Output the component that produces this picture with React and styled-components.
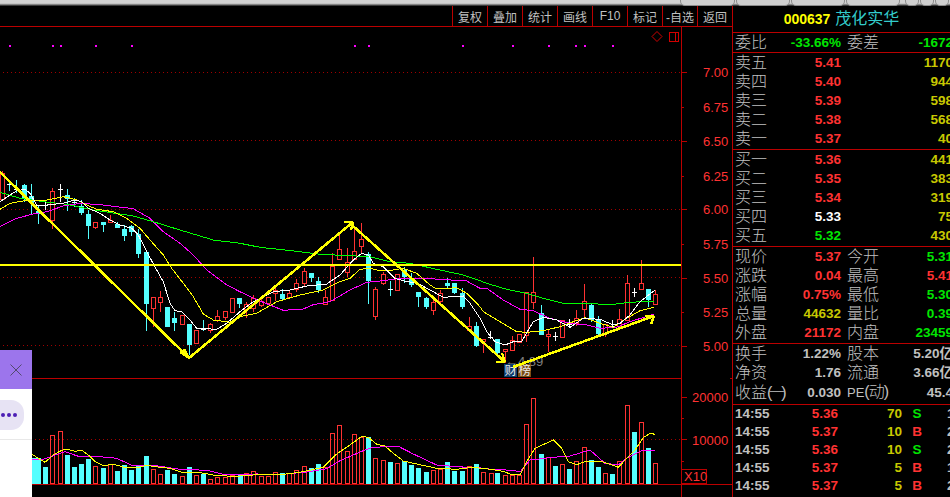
import React from 'react';
import styled, { createGlobalStyle } from 'styled-components';

const FONT = '"Liberation Sans","Noto Sans CJK SC",sans-serif';
const RED = '#ff3232', GREEN = '#00e600', OLIVE = '#c8c800', GRAY = '#c0c0c0', WHITE = '#ffffff';
const LINE = '#bb0000', CYAN = '#54ffff';

const Global = createGlobalStyle`
  html, body { margin: 0; padding: 0; background: #000; overflow: hidden; }
  #root { width: 950px; height: 497px; }
`;
const Page = styled.div`
  position: relative; width: 950px; height: 497px; overflow: hidden;
  display: flex; flex-direction: column; background: #000; font-family: ${FONT};
`;
const TopBar = styled.div`
  height: 6px; flex: none; display: flex; justify-content: flex-end; align-items: flex-end; gap: 1px;
  background: linear-gradient(#d2d2d2 0 3px, #b4b4b4 4px, #555 5px, #222 6px);
`;
const WinPill = styled.span`
  width: ${p => p.$w}px; height: 6px; margin-right: ${p => p.$mr || 0}px; box-sizing: border-box;
  background: #cfcfcf; border: 1px solid #8c8c8c; border-top: none; border-radius: 0 0 5px 5px;
`;
const Main = styled.div`flex: 1; display: flex; min-height: 0;`;
const Left = styled.div`
  width: 732px; flex: none; display: flex; flex-direction: column; border-right: 1px solid ${LINE};
`;
const Toolbar = styled.div`
  height: 20px; flex: none; display: flex; justify-content: flex-end; border-bottom: 1px solid ${LINE};
`;
const ToolButton = styled.div`
  width: 34px; border-left: 1px solid ${LINE}; color: ${GRAY}; font-size: 12px;
  display: flex; align-items: center; justify-content: center; white-space: nowrap;
`;
const ChartSvg = styled.svg`display: block; flex: none; font-family: ${FONT};`;
const AxisText = styled.text`fill: ${RED}; font-size: 13px;`;

const Panel = styled.div`width: 217px; flex: none; overflow: hidden;`;
const Section = styled.section`
  width: 220px; padding-bottom: ${p => p.$pb || 0}px;
  border-bottom: ${p => p.$noline ? 'none' : `1px solid ${LINE}`};
`;
const Header = styled.div`
  height: 26px; width: 217px; display: flex; align-items: center; justify-content: center; gap: 5px;
`;
const Code = styled.span`color: #ffff00; font-weight: 700; font-size: 14px;`;
const Name = styled.span`color: #33cccc; font-size: 16px; line-height: 26px;`;
const Row = styled.div`
  height: 19px; display: grid; grid-template-columns: 106px 106px; column-gap: 6px; padding-left: 2px;
`;
const Cell = styled.div`
  display: flex; justify-content: ${p => p.$end ? 'flex-end' : 'space-between'}; align-items: center; white-space: nowrap;
`;
const Label = styled.span`color: ${GRAY}; font-size: 16px; line-height: 19px; font-weight: 300;`;
const Squeeze = styled.span`letter-spacing: ${p => p.$s}px;`;
const Latin = styled.span`font-size: 13px;`;
const Value = styled.span`color: ${p => p.$c}; font-size: 13.5px; font-weight: 700; line-height: 19px;`;
const TickRow = styled.div`
  height: 18px; display: grid; grid-template-columns: 36px 67px 64px 30px auto; align-items: center;
  padding-left: 2px; font-size: 13.5px; font-weight: 700; line-height: 18px;
`;
const TickTime = styled.span`color: ${GRAY};`;
const TickPrice = styled.span`color: ${RED}; text-align: right;`;
const TickVol = styled.span`color: ${OLIVE}; text-align: right;`;
const TickSide = styled.span`color: ${p => p.$c}; text-align: center;`;
const TickCount = styled.span`color: ${GRAY}; padding-left: 15px;`;

const Float = styled.aside`
  position: absolute; left: 0; top: 350px; width: 32px; height: 147px; background: #fff;
  display: flex; flex-direction: column;
`;
const FloatClose = styled.div`
  height: 39px; flex: none; background: #9c75ec; display: flex; align-items: center; justify-content: center;
`;
const MorePill = styled.div`
  margin: 11px 0 0 -14px; width: 38px; height: 30px; flex: none; border-radius: 13px; background: #e7e3f4;
  display: flex; align-items: center; justify-content: flex-end; gap: 2px; padding-right: 7px; box-sizing: border-box;
`;
const Dot = styled.span`width: 4px; height: 4px; border-radius: 50%; background: #4c1fb4;`;
const FloatRule = styled.div`margin-top: 9px; height: 1px; background: #e8e8e8;`;

/* ---------- chart data read off the picture, in crop coordinates ---------- */
const map = (ox, oy, pts) => pts.map(([x, y]) => [ox + x / 3, oy + y / 3]);
const merge = (...lists) => {
  const out = [];
  lists.flat().forEach(p => { if (!out.length || p[0] > out[out.length - 1][0]) out.push(p); });
  return out;
};
const pathOf = pts => pts.map(p => `${p[0].toFixed(1)},${p[1].toFixed(1)}`).join(' ');

const white = merge(
  map(0, 160, [[0,125],[30,105],[50,92],[75,88],[90,100],[110,135],[140,135],[190,130],[225,120],[245,125],[265,145],[300,160],[330,180],[360,195],[395,205],[415,225],[440,275],[470,330],[490,365],[510,430],[525,452],[545,455],[570,480],[590,505],[650,508],[680,490],[720,455]]),
  map(240, 210, [[0,300],[40,275],[100,245],[150,240],[200,228],[260,222],[300,195],[340,150],[365,130],[385,135],[400,160],[430,170],[465,205],[500,215],[530,218],[570,240],[610,262],[670,258],[690,280],[720,325]]),
  map(470, 240, [[50,275],[75,305],[105,315],[130,305],[155,305],[175,270],[190,245],[220,232],[260,240],[300,262],[340,235],[390,238],[430,255],[450,250],[480,225],[510,185],[555,150]])
);
const yellow = merge(
  map(0, 160, [[0,148],[30,130],[70,123],[130,122],[190,110],[230,120],[260,135],[290,148],[340,155],[380,175],[420,205],[450,240],[490,285],[515,325],[550,370],[580,410],[610,462],[640,480],[690,487],[720,470]]),
  map(240, 210, [[0,330],[50,310],[110,275],[180,255],[250,240],[300,215],[330,205],[360,178],[390,175],[420,182],[460,180],[490,175],[530,190],[570,225],[590,237],[650,233],[680,250],[720,290]]),
  map(470, 240, [[40,215],[90,245],[140,275],[170,277],[220,272],[270,260],[310,245],[345,233],[390,250],[430,262],[470,235],[510,212],[553,202]])
);
const magenta = merge(
  map(0, 160, [[0,200],[50,175],[100,162],[140,155],[190,138],[240,130],[300,134],[400,146],[450,175],[490,215],[540,250],[580,285],[620,330],[680,375],[720,395]]),
  map(240, 210, [[0,247],[40,265],[90,285],[130,301],[190,297],[220,284],[270,275],[330,240],[380,217],[430,212],[480,205],[550,205],[600,208],[680,213],[720,235]]),
  map(470, 240, [[50,145],[100,180],[150,208],[190,212],[240,235],[300,250],[350,255],[390,265],[440,262],[480,245],[553,222]])
);
const green = merge(
  map(0, 160, [[0,97],[60,115],[130,125],[200,133],[280,150],[400,168],[460,185],[540,210],[640,240],[720,250]]),
  map(240, 210, [[0,100],[60,112],[180,125],[240,133],[390,140],[450,155],[510,160],[590,178],[670,195],[720,212]]),
  map(470, 240, [[50,130],[110,148],[170,160],[220,175],[280,190],[430,193],[480,187],[553,183]])
);

const cz = (ox, oy, list) => list.map(([x, t, b, wt, wb, k]) => ({
  x: Math.round(ox + x / 3), t: Math.round(oy + t / 3), b: Math.round(oy + b / 3),
  wt: Math.round(oy + wt / 3), wb: Math.round(oy + wb / 3), k,
}));
const candles = [
  ...cz(0, 160, [
    [7,40,118,33,120,'r'],[28,73,73,60,92,'c'],[49,88,88,60,100,'c'],[73,75,115,72,125,'c'],[94,108,130,72,162,'c'],
    [115,152,162,138,192,'c'],[136,135,135,120,150,'w'],[157,94,180,85,207,'r'],[180,88,110,72,125,'w'],[202,105,118,87,153,'c'],
    [223,125,125,115,140,'c'],[244,138,158,120,165,'c'],[265,162,198,150,237,'c'],[286,187,200,187,207,'r'],[310,186,195,186,216,'c'],
    [331,180,187,165,190,'r'],[352,192,204,185,204,'c'],[373,207,228,195,243,'c'],[394,198,216,195,228,'c'],[415,222,282,207,294,'c'],
    [439,276,432,276,513,'c'],[460,412,444,412,500,'r'],[481,412,425,393,456,'r'],[502,441,501,441,501,'c'],[523,474,489,456,513,'c'],
    [547,465,492,465,492,'r'],[568,492,555,492,585,'c'],[589,510,549,510,549,'r'],[610,507,507,480,512,'c'],[631,492,510,488,519,'r'],
    [652,468,480,450,486,'r'],[676,454,471,454,480,'r'],[697,414,456,414,456,'r'],[718,414,432,414,444,'c'],
  ]),
  ...cz(240, 210, [
    [19,283,298,276,325,'r'],[40,263,293,255,305,'r'],[64,272,285,265,290,'r'],[85,260,280,260,280,'r'],[106,240,250,225,272,'r'],
    [127,253,268,237,272,'c'],[148,248,262,240,268,'r'],[169,220,236,208,245,'r'],[193,183,218,175,230,'r'],[214,190,203,190,216,'c'],
    [235,213,241,202,250,'c'],[256,262,283,240,285,'r'],[277,168,271,130,271,'r'],[298,118,146,75,146,'r'],[322,157,186,115,200,'r'],
    [343,124,147,50,150,'r'],[364,88,107,40,130,'r'],[385,132,213,125,282,'c'],[406,238,319,232,330,'r'],[430,193,220,185,225,'r'],
    [451,238,238,212,258,'c'],[472,193,239,193,239,'r'],[493,180,200,170,218,'c'],[514,205,225,190,232,'c'],[535,247,260,247,291,'c'],
    [559,264,291,260,296,'c'],[580,275,299,260,315,'r'],[601,248,272,240,280,'r'],[622,220,228,205,238,'c'],[643,219,250,219,252,'c'],
    [667,250,291,235,296,'c'],[688,349,361,322,365,'r'],[709,348,408,336,410,'c'],
  ]),
  ...cz(470, 240, [
    [40,297,302,297,338,'r'],[61,291,291,272,297,'w'],[82,297,340,297,350,'c'],[106,328,332,328,368,'r'],[127,299,329,289,329,'r'],
    [148,283,305,283,305,'r'],[169,157,285,157,305,'r'],[190,157,186,52,207,'r'],[214,220,285,195,285,'c'],[235,283,287,268,335,'r'],
    [256,288,288,275,302,'w'],[277,241,292,241,292,'r'],[298,253,253,238,262,'w'],[319,235,250,210,258,'r'],[343,184,206,132,232,'r'],
    [364,195,240,190,245,'c'],[385,240,283,228,286,'c'],[406,251,278,251,290,'r'],[427,258,258,240,264,'w'],[448,238,258,207,262,'r'],
    [472,130,241,105,241,'r'],[493,157,157,145,170,'w'],[514,130,146,60,146,'r'],[535,148,180,148,200,'c'],[556,163,191,150,191,'r'],
  ]),
];

const vz = (ox, oy, list) => list.map(([x, t, k]) => ({ x: Math.round(ox + x / 3), t: Math.round(oy + t / 3), k }));
const volumes = [
  ...vz(0, 340, [[99,355,'c'],[115,355,'c'],[136,381,'c'],[157,286,'r'],[181,274,'r'],[202,345,'c'],[223,381,'c'],[244,372,'c'],[265,357,'c'],[286,378,'r'],[310,384,'c'],[331,373,'r'],[352,393,'c'],[373,375,'c'],[394,390,'c'],[415,375,'c'],[439,348,'c'],[460,387,'r'],[481,402,'r'],[502,390,'c'],[523,402,'c'],[547,408,'r'],[568,381,'c'],[589,405,'r'],[610,401,'c'],[631,417,'r'],[652,411,'r'],[676,411,'r'],[697,405,'r']]),
  ...vz(240, 380, [[0,282,'c'],[19,280,'r'],[40,274,'r'],[64,288,'r'],[85,288,'r'],[106,277,'r'],[127,279,'c'],[148,280,'r'],[169,271,'r'],[193,259,'r'],[214,264,'c'],[235,252,'c'],[256,262,'r'],[277,160,'r'],[298,136,'r'],[322,214,'r'],[343,163,'r'],[364,170,'r'],[385,172,'c'],[406,235,'r'],[430,241,'r'],[451,246,'c'],[472,250,'r'],[493,243,'c'],[514,255,'c'],[535,264,'c'],[559,276,'c'],[580,271,'r'],[601,268,'r'],[622,246,'c'],[643,273,'c'],[667,273,'c'],[688,259,'r'],[709,252,'c'],[730,277,'r']]),
  ...vz(490, 380, [[2,280,'r'],[22,279,'c'],[46,285,'r'],[67,285,'r'],[88,285,'r'],[109,133,'r'],[130,55,'r'],[154,222,'c'],[175,232,'r'],[196,258,'c'],[217,253,'r'],[238,267,'c'],[259,244,'r'],[283,202,'r'],[304,241,'c'],[325,261,'c'],[346,280,'r'],[367,282,'c'],[388,244,'r'],[412,76,'r'],[433,156,'c'],[454,127,'r'],[475,205,'c'],[496,250,'r']]),
];
const volYellow = merge(
  map(0, 340, [[96,343],[115,355],[135,367],[160,345],[185,331],[200,328],[225,334],[245,331],[265,345],[285,365],[310,377],[340,373],[370,381],[420,381],[440,376],[480,382],[510,385],[545,397],[600,398],[640,405],[680,408],[720,408]]),
  map(240, 380, [[0,288],[50,284],[120,284],[180,277],[250,262],[290,222],[330,195],[365,169],[385,172],[410,193],[435,198],[460,220],[490,243],[530,252],[590,265],[650,268],[700,262],[750,268]]),
  map(490, 380, [[40,274],[65,284],[90,284],[110,245],[135,205],[190,180],[215,205],[235,245],[260,254],[290,243],[340,246],[385,262],[410,235],[435,210],[460,173],[480,160],[495,163]])
);
const volMagenta = merge(
  map(0, 340, [[96,358],[130,358],[160,347],[195,335],[235,349],[300,350],[350,355],[395,376],[460,376],[500,382],[540,388],[620,391],[670,403],[720,405]]),
  map(240, 380, [[0,286],[50,282],[130,283],[200,276],[260,266],[300,242],[370,212],[400,202],[440,200],[475,199],[520,222],[590,255],[650,260],[740,265]]),
  map(490, 380, [[0,268],[70,271],[90,276],[120,240],[190,232],[240,228],[300,210],[345,250],[385,255],[410,235],[455,212],[495,212]])
);

const markDots = [9, 52, 60, 95, 131, 354, 368, 462, 512, 548, 575, 584, 612];
const priceAxis = [['7.00', 72], ['6.75', 107], ['6.50', 141], ['6.25', 176], ['6.00', 209], ['5.75', 244], ['5.50', 278], ['5.25', 312], ['5.00', 346]];
const gridRows = [72, 140, 209, 277, 345, 439];
const arrows = [
  '0,172 189,358', '180,352 189,358', '184,349 189,358',
  '189,358 353,222', '344,222 353,222', '353,222 351,230',
  '353,226 505,362', '496,362 505,362', '502,353 505,362',
  '513,367 654,316', '645,316 654,316', '654,316 651,324',
];

function Candle({ c }) {
  if (c.k === 'w' || c.t === c.b) {
    const col = c.k === 'w' ? '#fff' : CYAN;
    return (
      <g>
        <rect x={c.x} y={c.wt} width={1} height={c.wb - c.wt} fill={col} />
        <rect x={c.x - 2} y={c.t} width={5} height={1} fill="#fff" />
      </g>
    );
  }
  if (c.k === 'c') {
    return (
      <g>
        <rect x={c.x} y={c.wt} width={1} height={c.wb - c.wt} fill={CYAN} />
        <rect x={c.x - 2} y={c.t} width={5} height={c.b - c.t} fill={CYAN} />
      </g>
    );
  }
  return (
    <g>
      <rect x={c.x} y={c.wt} width={1} height={c.wb - c.wt} fill={RED} />
      <rect x={c.x - 1.5} y={c.t + 0.5} width={4} height={c.b - c.t} fill="#000" stroke={RED} />
    </g>
  );
}

function Chart() {
  return (
    <ChartSvg width="732" height="470" viewBox="0 27 732 470" shapeRendering="crispEdges">
      {gridRows.map(y => (
        <line key={y} x1="3" x2="681" y1={y + 0.5} y2={y + 0.5} stroke="#a00000" strokeDasharray="1 3" />
      ))}
      {markDots.map(x => <rect key={x} x={x} y="45" width="2" height="2" fill="#ff00ff" />)}
      <path d="M657 31.5 L662 36.5 L657 41.5 L652 36.5 Z" fill="none" stroke="#d00000" shapeRendering="auto" />
      <rect x="669.5" y="32.5" width="9" height="9" fill="none" stroke="#d00000" />
      <line x1="675.5" x2="675.5" y1="32" y2="42" stroke="#d00000" />

      {/* axes and panel frames */}
      <rect x="681" y="27" width="1" height="470" fill={LINE} />
      <rect x="32" y="378" width="649" height="1" fill={LINE} />
      <rect x="32" y="484" width="700" height="1" fill={LINE} />
      <rect x="730" y="378" width="2" height="1" fill={LINE} />
      {priceAxis.map(([t, y], i) => (
        <g key={t}>
          <rect x="681" y={y} width={i % 2 ? 3 : 6} height="1" fill={LINE} />
          <AxisText x="703" y={y + 5}>{t}</AxisText>
        </g>
      ))}
      <rect x="681" y="397" width="6" height="1" fill={LINE} />
      <rect x="681" y="418" width="3" height="1" fill={LINE} />
      <rect x="681" y="439" width="6" height="1" fill={LINE} />
      <rect x="681" y="461" width="3" height="1" fill={LINE} />
      <AxisText x="692" y="402">20000</AxisText>
      <AxisText x="692" y="445">10000</AxisText>
      <rect x="681.5" y="469.5" width="25" height="14" fill="#000" stroke={LINE} />
      <AxisText x="684" y="481">X10</AxisText>

      {/* volumes */}
      {volumes.map((v, i) => v.k === 'c'
        ? <rect key={i} x={v.x - 2} y={v.t} width={5} height={483 - v.t + 1} fill={CYAN} />
        : <rect key={i} x={v.x - 1.5} y={v.t + 0.5} width={4} height={483 - v.t} fill="none" stroke={RED} />)}
      <polyline points={pathOf(volMagenta)} fill="none" stroke="#ff00ff" />
      <polyline points={pathOf(volYellow)} fill="none" stroke="#ffff00" />

      {/* candles and averages */}
      {candles.map((c, i) => <Candle key={i} c={c} />)}
      <polyline points={pathOf(magenta)} fill="none" stroke="#ff00ff" />
      <polyline points={pathOf(green)} fill="none" stroke="#00ff00" />
      <polyline points={pathOf(yellow)} fill="none" stroke="#ffff00" />
      <polyline points={pathOf(white)} fill="none" stroke="#ffffff" />

      {/* annotation */}
      <text x="505" y="366" fill="#808080" fontSize="13">←4.89</text>
      <rect x="504" y="364" width="13" height="13" fill="#0c3c6c" />
      <rect x="518" y="364" width="13" height="13" fill="#7c4c14" />
      <text x="504.5" y="375" fill="#e8e8e8" fontSize="12.5">财</text>
      <text x="518.5" y="375" fill="#e8e8e8" fontSize="12.5">榜</text>

      {/* drawn trend lines */}
      <rect x="0" y="264" width="681" height="2" fill="#ffff00" />
      {arrows.map(a => <polyline key={a} points={a} fill="none" stroke="#ffff00" strokeWidth="2.5" />)}
    </ChartSvg>
  );
}

const tools = ['复权', '叠加', '统计', '画线', 'F10', '标记', '-自选', '返回'];
const asks = [['卖五', '5.41', RED, '1170'], ['卖四', '5.40', RED, '944'], ['卖三', '5.39', RED, '598'], ['卖二', '5.38', RED, '568'], ['卖一', '5.37', RED, '40']];
const bids = [['买一', '5.36', RED, '441'], ['买二', '5.35', RED, '383'], ['买三', '5.34', RED, '319'], ['买四', '5.33', WHITE, '75'], ['买五', '5.32', GREEN, '430']];
const quote = [
  ['现价', '5.37', RED, '今开', '5.31', GREEN],
  ['涨跌', '0.04', RED, '最高', '5.41', RED],
  ['涨幅', '0.75%', RED, '最低', '5.30', GREEN],
  ['总量', '44632', OLIVE, '量比', '0.39', GREEN],
  ['外盘', '21172', RED, '内盘', '23459', GREEN],
];
const finance = [
  ['换手', '1.22%', '股本', '5.20亿'],
  ['净资', '1.76', '流通', '3.66亿'],
  [<>收益<Squeeze $s={-3.5}>(一)</Squeeze></>, '0.030', <><Latin>PE</Latin><Squeeze $s={-1}>(动)</Squeeze></>, '45.4'],
];
const trades = [
  ['14:55', '5.36', '70', 'S', '1'],
  ['14:55', '5.37', '10', 'B', '2'],
  ['14:55', '5.36', '10', 'S', '2'],
  ['14:55', '5.37', '5', 'B', '1'],
  ['14:55', '5.37', '5', 'B', '2'],
];

const Book = ({ rows, pb }) => (
  <Section $pb={pb}>
    {rows.map(([l, p, c, v]) => (
      <Row key={l}>
        <Cell><Label>{l}</Label><Value $c={c}>{p}</Value></Cell>
        <Cell $end><Value $c={OLIVE}>{v}</Value></Cell>
      </Row>
    ))}
  </Section>
);

export default function App() {
  return (
    <Page>
      <Global />
      <TopBar>
        <WinPill $w={55} /><WinPill $w={54} /><WinPill $w={54} /><WinPill $w={54} $mr={4} />
        <WinPill $w={14} /><WinPill $w={14} /><WinPill $w={14} $mr={1} />
      </TopBar>
      <Main>
        <Left>
          <Toolbar>{tools.map(t => <ToolButton key={t}>{t}</ToolButton>)}</Toolbar>
          <Chart />
        </Left>
        <Panel>
          <Section>
            <Header><Code>000637</Code><Name>茂化实华</Name></Header>
          </Section>
          <Section>
            <Row>
              <Cell><Label>委比</Label><Value $c={GREEN}>-33.66%</Value></Cell>
              <Cell><Label>委差</Label><Value $c={GREEN}>-1672</Value></Cell>
            </Row>
          </Section>
          <Book rows={asks} pb={1} />
          <Book rows={bids} pb={1} />
          <Section $pb={1}>
            {quote.map(([a, b, c, d, e, f]) => (
              <Row key={a}>
                <Cell><Label>{a}</Label><Value $c={c}>{b}</Value></Cell>
                <Cell><Label>{d}</Label><Value $c={f}>{e}</Value></Cell>
              </Row>
            ))}
          </Section>
          <Section $pb={3}>
            {finance.map(([a, b, c, d], i) => (
              <Row key={i}>
                <Cell><Label>{a}</Label><Value $c={GRAY}>{b}</Value></Cell>
                <Cell><Label>{c}</Label><Value $c={GRAY}>{d}</Value></Cell>
              </Row>
            ))}
          </Section>
          <Section $noline>
            {trades.map(([t, p, v, s, n], i) => (
              <TickRow key={i}>
                <TickTime>{t}</TickTime>
                <TickPrice>{p}</TickPrice>
                <TickVol>{v}</TickVol>
                <TickSide $c={s === 'S' ? GREEN : RED}>{s}</TickSide>
                <TickCount>{n}</TickCount>
              </TickRow>
            ))}
          </Section>
        </Panel>
      </Main>
      <Float>
        <FloatClose>
          <svg width="12" height="12" viewBox="0 0 12 12"><path d="M0.5 0.5 L11.5 11.5 M11.5 0.5 L0.5 11.5" stroke="#4a4560" strokeWidth="0.9" fill="none" /></svg>
        </FloatClose>
        <MorePill><Dot /><Dot /><Dot /></MorePill>
        <FloatRule />
      </Float>
    </Page>
  );
}
